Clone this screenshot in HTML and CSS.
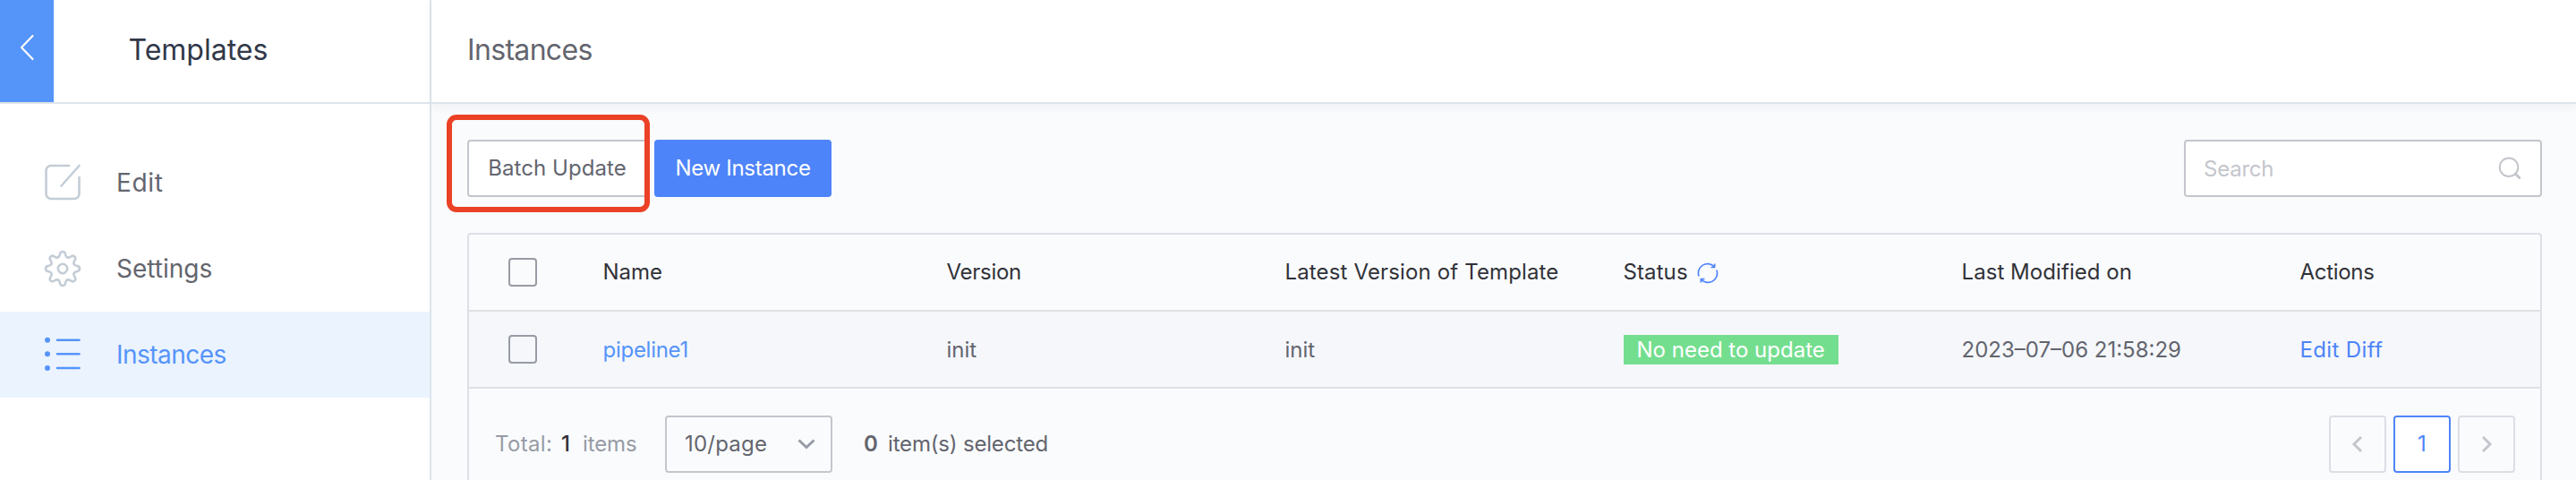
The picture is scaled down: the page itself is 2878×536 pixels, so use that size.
FILE: index.html
```html
<!DOCTYPE html>
<html lang="en">
<head>
<meta charset="utf-8">
<title>Templates - Instances</title>
<link rel="stylesheet" href="styles.css">
</head>
<body>
<div class="app">
  <aside class="sidebar">
    <div class="side-head">
      <button class="back" aria-label="Back">
        <svg width="18" height="30" viewBox="0 0 18 30"><path d="M15.500 2 3 15l12.500 13"/></svg>
      </button>
      <h2 class="side-title">Templates</h2>
    </div>
    <nav class="menu">
      <a class="menu-item">
        <svg class="menu-icon" width="42" height="42" viewBox="0 0 42 42"><path d="M28 2H8a5.500 5.500 0 0 0-5.500 5.500v26A5.500 5.500 0 0 0 8 39h26a5.500 5.500 0 0 0 5.500-5.500V15M39.500 2 19.500 24.500"/></svg>
        <span class="edit-label">Edit</span>
      </a>
      <a class="menu-item">
        <svg class="menu-icon" width="42" height="42" viewBox="-21 -21 42 42">
          <defs><path id="tooth" d="M-5.200-12.600C-3.400-13.200-3.400-14.600-3.100-16C-2.800-17.600-2-19 0-19S2.800-17.600 3.100-16C3.400-14.600 3.400-13.200 5.200-12.600"/></defs>
          <use href="#tooth"/><use href="#tooth" transform="rotate(45)"/><use href="#tooth" transform="rotate(90)"/><use href="#tooth" transform="rotate(135)"/><use href="#tooth" transform="rotate(180)"/><use href="#tooth" transform="rotate(225)"/><use href="#tooth" transform="rotate(270)"/><use href="#tooth" transform="rotate(315)"/>
          <circle r="5.200"/>
        </svg>
        <span class="settings-label">Settings</span>
      </a>
      <a class="menu-item active">
        <svg class="menu-icon" width="42" height="42" viewBox="0 0 42 42"><path d="M15 4.700h24.500M15 20.300h24.500M15 36h24.500"/><g class="dots"><circle cx="4" cy="4.700" r="3"/><circle cx="4" cy="20.300" r="3"/><circle cx="4" cy="36" r="3"/></g></svg>
        <span class="instances-label">Instances</span>
      </a>
    </nav>
  </aside>
  <main class="main">
    <header class="page-head"><h1>Instances</h1></header>
    <div class="content">
      <div class="toolbar">
        <div class="batch">
          <button class="btn btn-default">Batch Update</button>
          <div class="highlight"></div>
        </div>
        <button class="btn btn-primary">New Instance</button>
        <div class="search">
          <span>Search</span>
          <svg width="28" height="28" viewBox="0 0 28 28"><circle cx="13" cy="12.700" r="10.300"/><path class="handle" d="m20.500 20.200 4.300 4.300"/></svg>
        </div>
      </div>
      <section class="table">
        <div class="row head">
          <div class="check-cell"><span class="checkbox"></span></div>
          <div class="cell">Name</div>
          <div class="cell t-version">Version</div>
          <div class="cell t-latest">Latest Version of Template</div>
          <div class="cell t-status">Status
            <svg width="24" height="24" viewBox="0 0 24 24"><path d="M2.100 15.500A10.300 10.300 0 0 1 19.300 4.900M21.900 8.500A10.300 10.300 0 0 1 4.700 19.100M19.600 1.500V5.500H15.500M4.400 22.500V18.500H8.500"/></svg>
          </div>
          <div class="cell t-modified">Last Modified on</div>
          <div class="cell t-actions">Actions</div>
        </div>
        <div class="row body">
          <div class="check-cell"><span class="checkbox"></span></div>
          <div class="cell t-pipeline">pipeline1</div>
          <div class="cell">init</div>
          <div class="cell">init</div>
          <div class="cell"><span class="tag">No need to update</span></div>
          <div class="cell">2023–07–06 21:58:29</div>
          <div class="cell t-diff">Edit Diff</div>
        </div>
        <footer class="foot">
          <span class="total">Total:</span>
          <b class="count">1</b>
          <span class="items">items</span>
          <div class="select"><span>10/page</span>
            <svg width="22" height="14" viewBox="0 0 22 14"><path d="m2.500 2.500 8.500 8 8.500-8"/></svg>
          </div>
          <b class="zero">0</b>
          <span class="selected">item(s) selected</span>
          <div class="pager">
            <span class="page"><svg width="14" height="20" viewBox="0 0 14 20"><path d="m11 2-8 8 8 8"/></svg></span>
            <span class="page current">1</span>
            <span class="page"><svg width="14" height="20" viewBox="0 0 14 20"><path d="m3 2 8 8-8 8"/></svg></span>
          </div>
        </footer>
      </section>
    </div>
  </main>
</div>
</body>
</html>
```
FILE: styles.css
```css
* { box-sizing: border-box; }
body {
  margin: 0;
  background: #fafbfd;
  font: 24px Inter, "Liberation Sans", sans-serif;
  color: #63656e;
}
svg { display: block; fill: none; stroke: currentColor; flex: none; }
button { font: inherit; border: 0; margin: 0; }
h1, h2 { margin: 0; font-size: 32px; font-weight: 400; line-height: 112px; }

.app { display: flex; height: 536px; }

/* Sidebar */
.sidebar { width: 482px; flex: none; background: #fff; border-right: 2px solid #dde4eb; }
.side-head { display: flex; height: 116px; border-bottom: 2px solid #dde4eb; }
.back { width: 60px; height: 114px; padding: 0 0 8px 21px; background: #5594f8; color: #fff; }
.back svg { stroke-width: 2.200; stroke-linejoin: round; stroke-linecap: round; }
.side-title { padding-left: 83.500px; color: #313848; }
.menu { padding-top: 40px; }
.menu-item { display: flex; align-items: center; gap: 39px; height: 96px; padding-left: 49px; font-size: 28px; }
.menu-icon { color: #c4cdd6; stroke-width: 2.600; stroke-linecap: round; stroke-linejoin: round; }
.active { background: #ebf3fe; color: #5594fa; }
.active .menu-icon { color: inherit; }
.dots { fill: currentColor; stroke: none; }
.edit-label { letter-spacing: 0.700px; }
.instances-label { letter-spacing: -0.530px; }

/* Page */
.main { flex: 1; min-width: 0; }
.page-head {
  height: 116px;
  padding-left: 40px;
  background: #fff;
  border-bottom: 2px solid #dde4eb;
  box-shadow: 0 4px 10px rgba(50, 60, 80, .05);
}
.page-head h1 { letter-spacing: -0.670px; }
.content { padding: 40px 38px 0 40px; }
.toolbar { display: flex; height: 64px; margin-bottom: 40px; }
.batch { position: relative; margin-right: 6px; }
.btn { height: 64px; border-radius: 4px; padding: 0 0 2px; text-align: center; white-space: nowrap; }
.btn-default { width: 203px; padding-right: 2px; background: #fff; border: 2px solid #c4c6cc; color: #63656e; letter-spacing: 0.080px; }
.btn-primary { width: 198px; background: #4e84f9; color: #fff; letter-spacing: -0.290px; }
.highlight {
  position: absolute;
  left: -23px;
  top: -28px;
  width: 227px;
  height: 109px;
  border: 6px solid #eb4126;
  border-radius: 11px;
}
.search {
  display: flex;
  align-items: center;
  justify-content: space-between;
  width: 400px;
  height: 64px;
  margin-left: auto;
  padding: 0 20px;
  background: #fff;
  border: 2px solid #c4c6cc;
  border-radius: 4px;
  color: #c4c6cc;
  letter-spacing: -0.230px;
}
.search svg { stroke-width: 2; }
.search .handle { stroke-width: 3; stroke-linecap: round; }

/* Table */
.table { border: 2px solid #dfe0e5; border-bottom: 0; border-radius: 4px 4px 0 0; }
.row {
  display: grid;
  grid-template-columns: 119.500px 384px repeat(4, 378px) 1fr;
  align-items: center;
  height: 86px;
  border-bottom: 2px solid #dfe0e5;
}
.head { color: #313238; }
.body { background: #f5f7fb; }
.check-cell { padding-left: 44px; }
.checkbox { display: block; width: 32px; height: 32px; border: 2px solid #979ba5; border-radius: 4px; }
.cell { padding-left: 30px; white-space: nowrap; }
.head .cell { padding-bottom: 2px; }
.t-version { letter-spacing: -0.290px; }
.t-latest { letter-spacing: 0.140px; }
.t-status { display: flex; align-items: center; gap: 10px; letter-spacing: 0.100px; }
.t-status svg { margin-top: 4px; color: #4e84f9; stroke-width: 1.700; }
.t-modified { letter-spacing: 0.060px; }
.t-actions { letter-spacing: -0.300px; }
.t-pipeline { color: #5594fa; letter-spacing: -0.270px; }
.t-diff { color: #4e84f9; letter-spacing: 0.360px; }
.tag {
  display: block;
  width: 240px;
  height: 33px;
  padding-left: 15px;
  line-height: 33px;
  background: #74de8f;
  color: #fff;
}

/* Footer */
.foot { display: flex; height: 102px; padding: 30px 28px 0 29px; line-height: 64px; white-space: nowrap; }
.total { width: 74px; color: #979ba5; letter-spacing: 0.350px; }
.count { width: 24px; font-weight: 500; color: #313238; }
.items { width: 92px; color: #979ba5; letter-spacing: -0.110px; }
.select {
  display: flex;
  align-items: center;
  justify-content: space-between;
  width: 187px;
  height: 64px;
  padding: 0 16px 0 20px;
  border: 2px solid #c4c6cc;
  border-radius: 4px;
  letter-spacing: 0.220px;
}
.select svg { color: #979ba5; stroke-width: 3; }
.zero { margin-left: 35px; width: 27px; font-weight: 600; }
.selected { letter-spacing: -0.180px; }
.pager { display: flex; gap: 8px; margin-left: auto; }
.page {
  display: flex;
  align-items: center;
  justify-content: center;
  width: 64px;
  height: 64px;
  border: 2px solid #dcdee5;
  border-radius: 4px;
  color: #c4c6cc;
}
.page svg { stroke-width: 3; }
.current { background: #fff; border-color: #4e84f9; color: #4e84f9; }
```
